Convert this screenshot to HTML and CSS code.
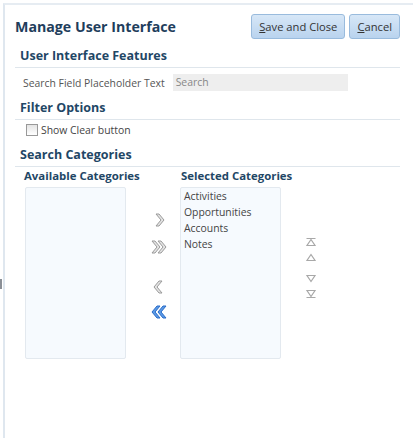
FILE: index.html
```html
<!DOCTYPE html>
<html>
<head>
  <meta name="viewport" content="width=device-width, initial-scale=1.0">
  <link rel="stylesheet" href="styles.css">
</head>
<body>
  <span class="edge-mark"></span>
  <div class="panel">
    <div class="panel-header">
      <h1 class="title">Manage User Interface</h1>
      <div class="actions">
        <button class="btn"><u>S</u>ave and Close</button>
        <button class="btn"><u>C</u>ancel</button>
      </div>
    </div>

    <h2 class="section-title">User Interface Features</h2>
    <div class="section-body">
      <div class="field-row">
        <label class="field-label">Search Field Placeholder Text</label>
        <div class="text-input">Search</div>
      </div>
    </div>

    <h2 class="section-title">Filter Options</h2>
    <div class="section-body">
      <label class="check-row"><span class="checkbox"></span>Show Clear button</label>
    </div>

    <h2 class="section-title">Search Categories</h2>
    <div class="shuttle">
      <div class="shuttle-col">
        <div class="list-title">Available Categories</div>
        <div class="list-box"></div>
      </div>

      <div class="move-buttons">
        <svg class="icon" viewBox="0 0 16 14"><path d="M5 1 H8 L13 7 L8 13 H5 L10 7 Z" /></svg>
        <svg class="icon gap-small" viewBox="0 0 16 14"><path d="M1 1 H4 L9 7 L4 13 H1 L6 7 Z M7 1 H10 L15 7 L10 13 H7 L12 7 Z" /></svg>
        <svg class="icon gap-big" viewBox="0 0 16 14"><path d="M11 1 H8 L3 7 L8 13 H11 L6 7 Z" /></svg>
        <svg class="icon blue gap-last" viewBox="0 0 16 14"><path d="M9 1 H6 L1 7 L6 13 H9 L4 7 Z M15 1 H12 L7 7 L12 13 H15 L10 7 Z" /></svg>
      </div>

      <div class="shuttle-col">
        <div class="list-title right">Selected Categories</div>
        <div class="list-box right">
          <div class="list-item">Activities</div>
          <div class="list-item">Opportunities</div>
          <div class="list-item">Accounts</div>
          <div class="list-item">Notes</div>
        </div>
      </div>

      <div class="order-buttons">
        <svg class="tri" viewBox="0 0 12 10"><path d="M1.5 1.5 H10.5 M6 2.5 L10 8.5 H2 Z" /></svg>
        <svg class="tri" viewBox="0 0 12 10"><path d="M6 2.5 L10 8.5 H2 Z" /></svg>
        <svg class="tri gap-order" viewBox="0 0 12 10"><path d="M6 7.5 L10 1.5 H2 Z" /></svg>
        <svg class="tri" viewBox="0 0 12 10"><path d="M6 7.5 L10 1.5 H2 Z M1.5 8.5 H10.5" /></svg>
      </div>
    </div>
  </div>
</body>
</html>
```

FILE: styles.css
```css
* {
  box-sizing: border-box;
}

body {
  margin: 0;
  background: #ffffff;
  font-family: 'Open Sans', 'Liberation Sans', sans-serif;
  font-size: 10.4px;
  color: #333;
  overflow: hidden;
}

.edge-mark {
  position: absolute;
  left: 0;
  top: 279px;
  width: 2px;
  height: 10px;
  background: #8a8f96;
}

.panel {
  margin: 3px 0 0 3px;
  height: 435px;
  width: 410px;
  border-left: 2px solid #dfe7ef;
  border-top: 2px solid #e6ecf2;
  padding: 8px 13px 0 10px;
}

.panel-header {
  display: flex;
  justify-content: space-between;
  align-items: center;
  height: 26px;
}

.title {
  margin: 0;
  font-size: 14.2px;
  font-weight: bold;
  color: #1f3e5c;
}

.actions {
  display: flex;
  gap: 4px;
}

.btn {
  height: 25px;
  padding: 0 7px;
  font-family: inherit;
  font-size: 11.2px;
  color: #333;
  border: 1px solid #99bbdd;
  border-radius: 3px;
  background: linear-gradient(#d7e7f7, #b9d3ee);
}

.btn u {
  text-decoration: underline;
}

.section-title {
  margin: 8px 0 0 0;
  padding: 0 0 3px 5px;
  font-size: 12.5px;
  font-weight: bold;
  color: #1f4766;
  border-bottom: 1px solid #dfe6ec;
}

.section-body {
  padding-left: 8px;
}

.field-row {
  display: flex;
  align-items: center;
  gap: 8px;
  margin-top: 6px;
}

.field-label {
  color: #555;
}

.text-input {
  width: 175px;
  height: 17px;
  padding: 1px 3px;
  background: #eeeeee;
  color: #888;
}

.check-row {
  display: flex;
  align-items: center;
  gap: 3px;
  height: 17px;
  margin-top: 1px;
  color: #444;
}

.checkbox {
  width: 12px;
  height: 12px;
  margin-left: 3px;
  border: 1px solid #999;
  background: linear-gradient(#e4e4e4, #ffffff);
}

.shuttle {
  display: flex;
  align-items: flex-start;
  padding-left: 9px;
  margin-top: 1px;
}

.shuttle-col {
  width: 102px;
}

.list-title {
  font-size: 11.4px;
  font-weight: bold;
  color: #1f4766;
  margin-bottom: 4px;
  white-space: nowrap;
}

.list-title.right {
  padding-left: 1px;
}

.list-box {
  width: 101px;
  height: 172px;
  margin-left: 1px;
  border: 1px solid #e3e9ef;
  border-radius: 2px;
  background: #f6fafe;
  padding: 0 3px;
}

.list-box.right {
  margin-left: 0;
}

.list-item {
  height: 16px;
  line-height: 16px;
  color: #444;
}

.move-buttons {
  width: 54px;
  display: flex;
  flex-direction: column;
  align-items: center;
  padding: 45px 0 0 12px;
}

.icon {
  width: 16px;
  height: 14px;
  fill: #e4e4e4;
  stroke: #9a9a9a;
  stroke-width: 1;
  stroke-linejoin: round;
}

.icon.blue {
  fill: #5b9ae6;
  stroke: #2a6cc8;
}

.gap-small {
  margin-top: 13px;
}

.gap-big {
  margin-top: 26px;
}

.gap-last {
  margin-top: 11px;
}

.order-buttons {
  display: flex;
  flex-direction: column;
  align-items: center;
  width: 58px;
  padding-top: 69px;
  gap: 5px;
}

.tri {
  width: 12px;
  height: 10px;
  fill: none;
  stroke: #a8a8a8;
  stroke-width: 1.2;
}

.gap-order {
  margin-top: 7px;
}
```
